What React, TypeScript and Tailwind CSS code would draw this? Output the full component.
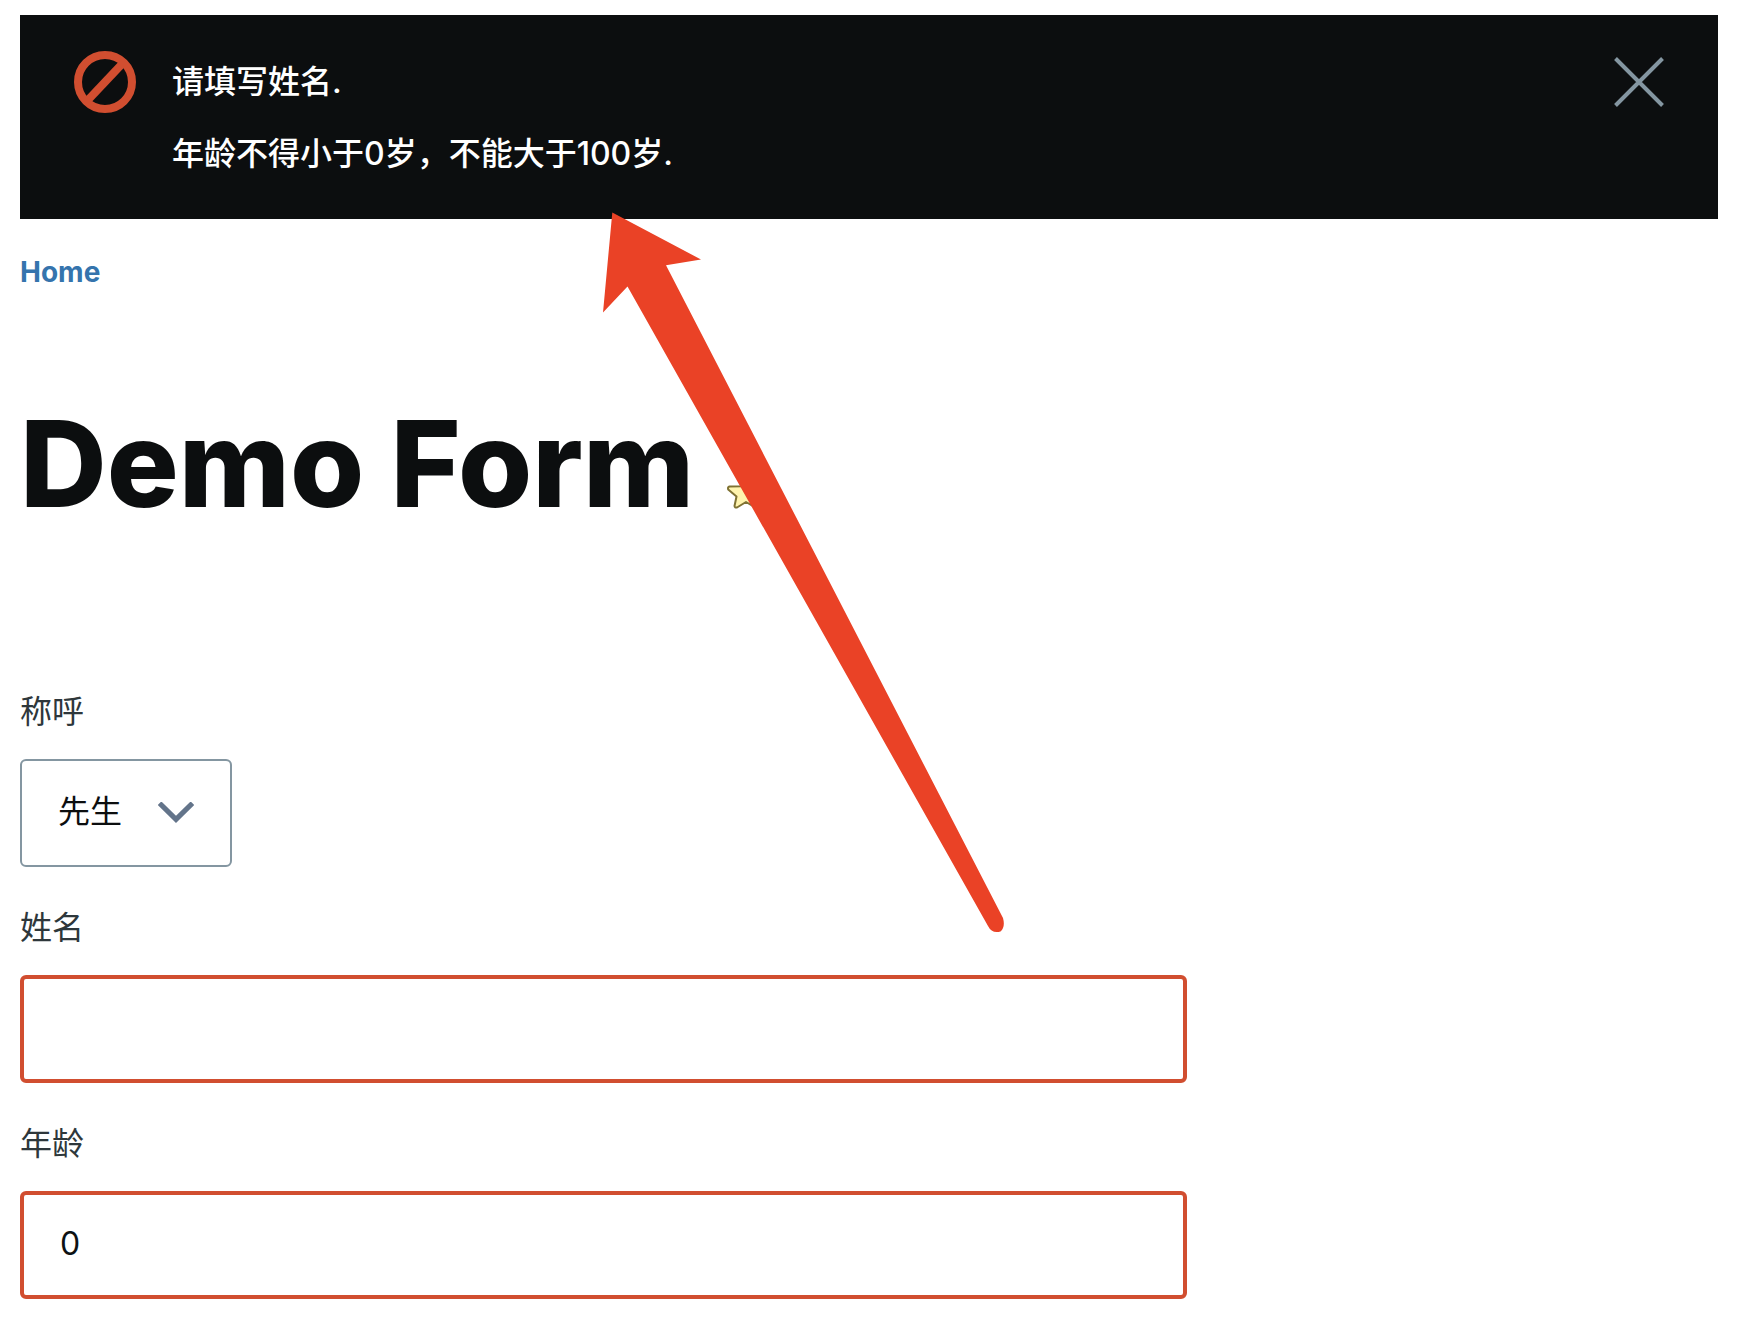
import React from "react";

function ErrorIcon() {
  return (
    <svg className="h-[62px] w-[62px] shrink-0" viewBox="0 0 62 62" fill="none" stroke="#d14e30" strokeWidth="8" aria-hidden="true">
      <circle cx="31" cy="31" r="27" />
      <path d="M14 49 48 13" />
    </svg>
  );
}

function StarIcon() {
  return (
    <svg className="h-10 w-10" viewBox="0 0 40 40" fill="#fff4ae" stroke="#7f7233" strokeWidth="2" strokeLinejoin="round" aria-hidden="true">
      <path d="M20 2.500 24.500 14.200 37 15Q38.500 16.500 37 17.500L28.800 23.500 31.500 34Q31 36 29.300 35.500L20 30 11 35.500Q8.700 36 8.500 34L10.500 24.500 2.200 17.500Q1.500 15 3.500 14.500L15.500 14.200Z" />
    </svg>
  );
}

function Arrow() {
  return (
    <svg className="pointer-events-none absolute top-[212px] left-[600px] h-[722px] w-[406px]" viewBox="600 212 406 722" fill="#ea4226" aria-hidden="true">
      <path d="M612.3 212.5 701 259.5 666 265.2 1003 918Q1005.500 927 1000.500 931.500 992 934 988 926L627.500 286.500 603 312.500Z" />
    </svg>
  );
}

function TextField({ id, label, defaultValue }: { id: string; label: string; defaultValue?: string }) {
  return (
    <div className="flex flex-col items-start gap-7">
      <label htmlFor={id} className="leading-[38px] text-[#2e373b]">{label}</label>
      <input
        id={id}
        type="text"
        defaultValue={defaultValue}
        aria-invalid="true"
        className="h-[108px] w-11/16 rounded-md border-4 border-[#d14e30] bg-white px-9 pb-1 text-[#0d1214] outline-none"
      />
    </div>
  );
}

export default function App() {
  return (
    <div className="relative min-h-screen bg-white px-5 pt-[15px] pb-5 font-['Inter','Noto_Sans_CJK_SC',sans-serif] text-[32px] text-[#0c0e0f]">
      <div role="alert" className="flex items-start bg-[#0c0e0f] px-[54px] py-9 text-white">
        <ErrorIcon />
        <ul className="ml-9 flex flex-1 flex-col gap-[34px] pt-3 pb-[10px] leading-[38px] font-medium">
          <li>请填写姓名.</li>
          <li>年龄不得小于0岁，不能大于100岁.</li>
        </ul>
        <button type="button" aria-label="关闭" className="mt-[6px]">
          <svg className="h-[50px] w-[50px]" viewBox="0 0 50 50" fill="none" stroke="#8496a1" strokeWidth="4" aria-hidden="true">
            <path d="M1.500 1.500 48.500 48.500M48.500 1.500 1.500 48.500" />
          </svg>
        </button>
      </div>

      <nav className="mt-[34px] text-[28px] leading-[38px] font-bold">
        <a href="#home" className="text-[#3574ad]">Home</a>
      </nav>

      <div className="mt-[102px] flex items-end gap-8">
        <h1 className="text-[120px] leading-[142px] font-extrabold">Demo Form</h1>
        <a href="#shortcut" aria-label="添加到快捷方式" className="mb-[23px]"><StarIcon /></a>
      </div>

      <form className="mt-[158px] flex flex-col gap-[42px]">
        <div className="flex flex-col items-start gap-7">
          <label htmlFor="title" className="leading-[38px] text-[#2e373b]">称呼</label>
          <div className="grid items-center">
            <select id="title" className="col-start-1 row-start-1 h-[108px] w-[212px] appearance-none rounded-md border-2 border-[#8496a1] bg-white px-9 pb-[2px] text-[#0c0e0f]">
              <option>先生</option>
              <option>女士</option>
            </select>
            <svg className="pointer-events-none col-start-1 row-start-1 mr-[38px] h-[22px] w-9 justify-self-end" viewBox="0 0 36 22" fill="none" stroke="#63748a" strokeWidth="5" aria-hidden="true">
              <path d="M1.600 1.200 18 17.400 34.400 1.200" />
            </svg>
          </div>
        </div>
        <TextField id="name" label="姓名" />
        <TextField id="age" label="年龄" defaultValue="0" />
      </form>
      <Arrow />
    </div>
  );
}
